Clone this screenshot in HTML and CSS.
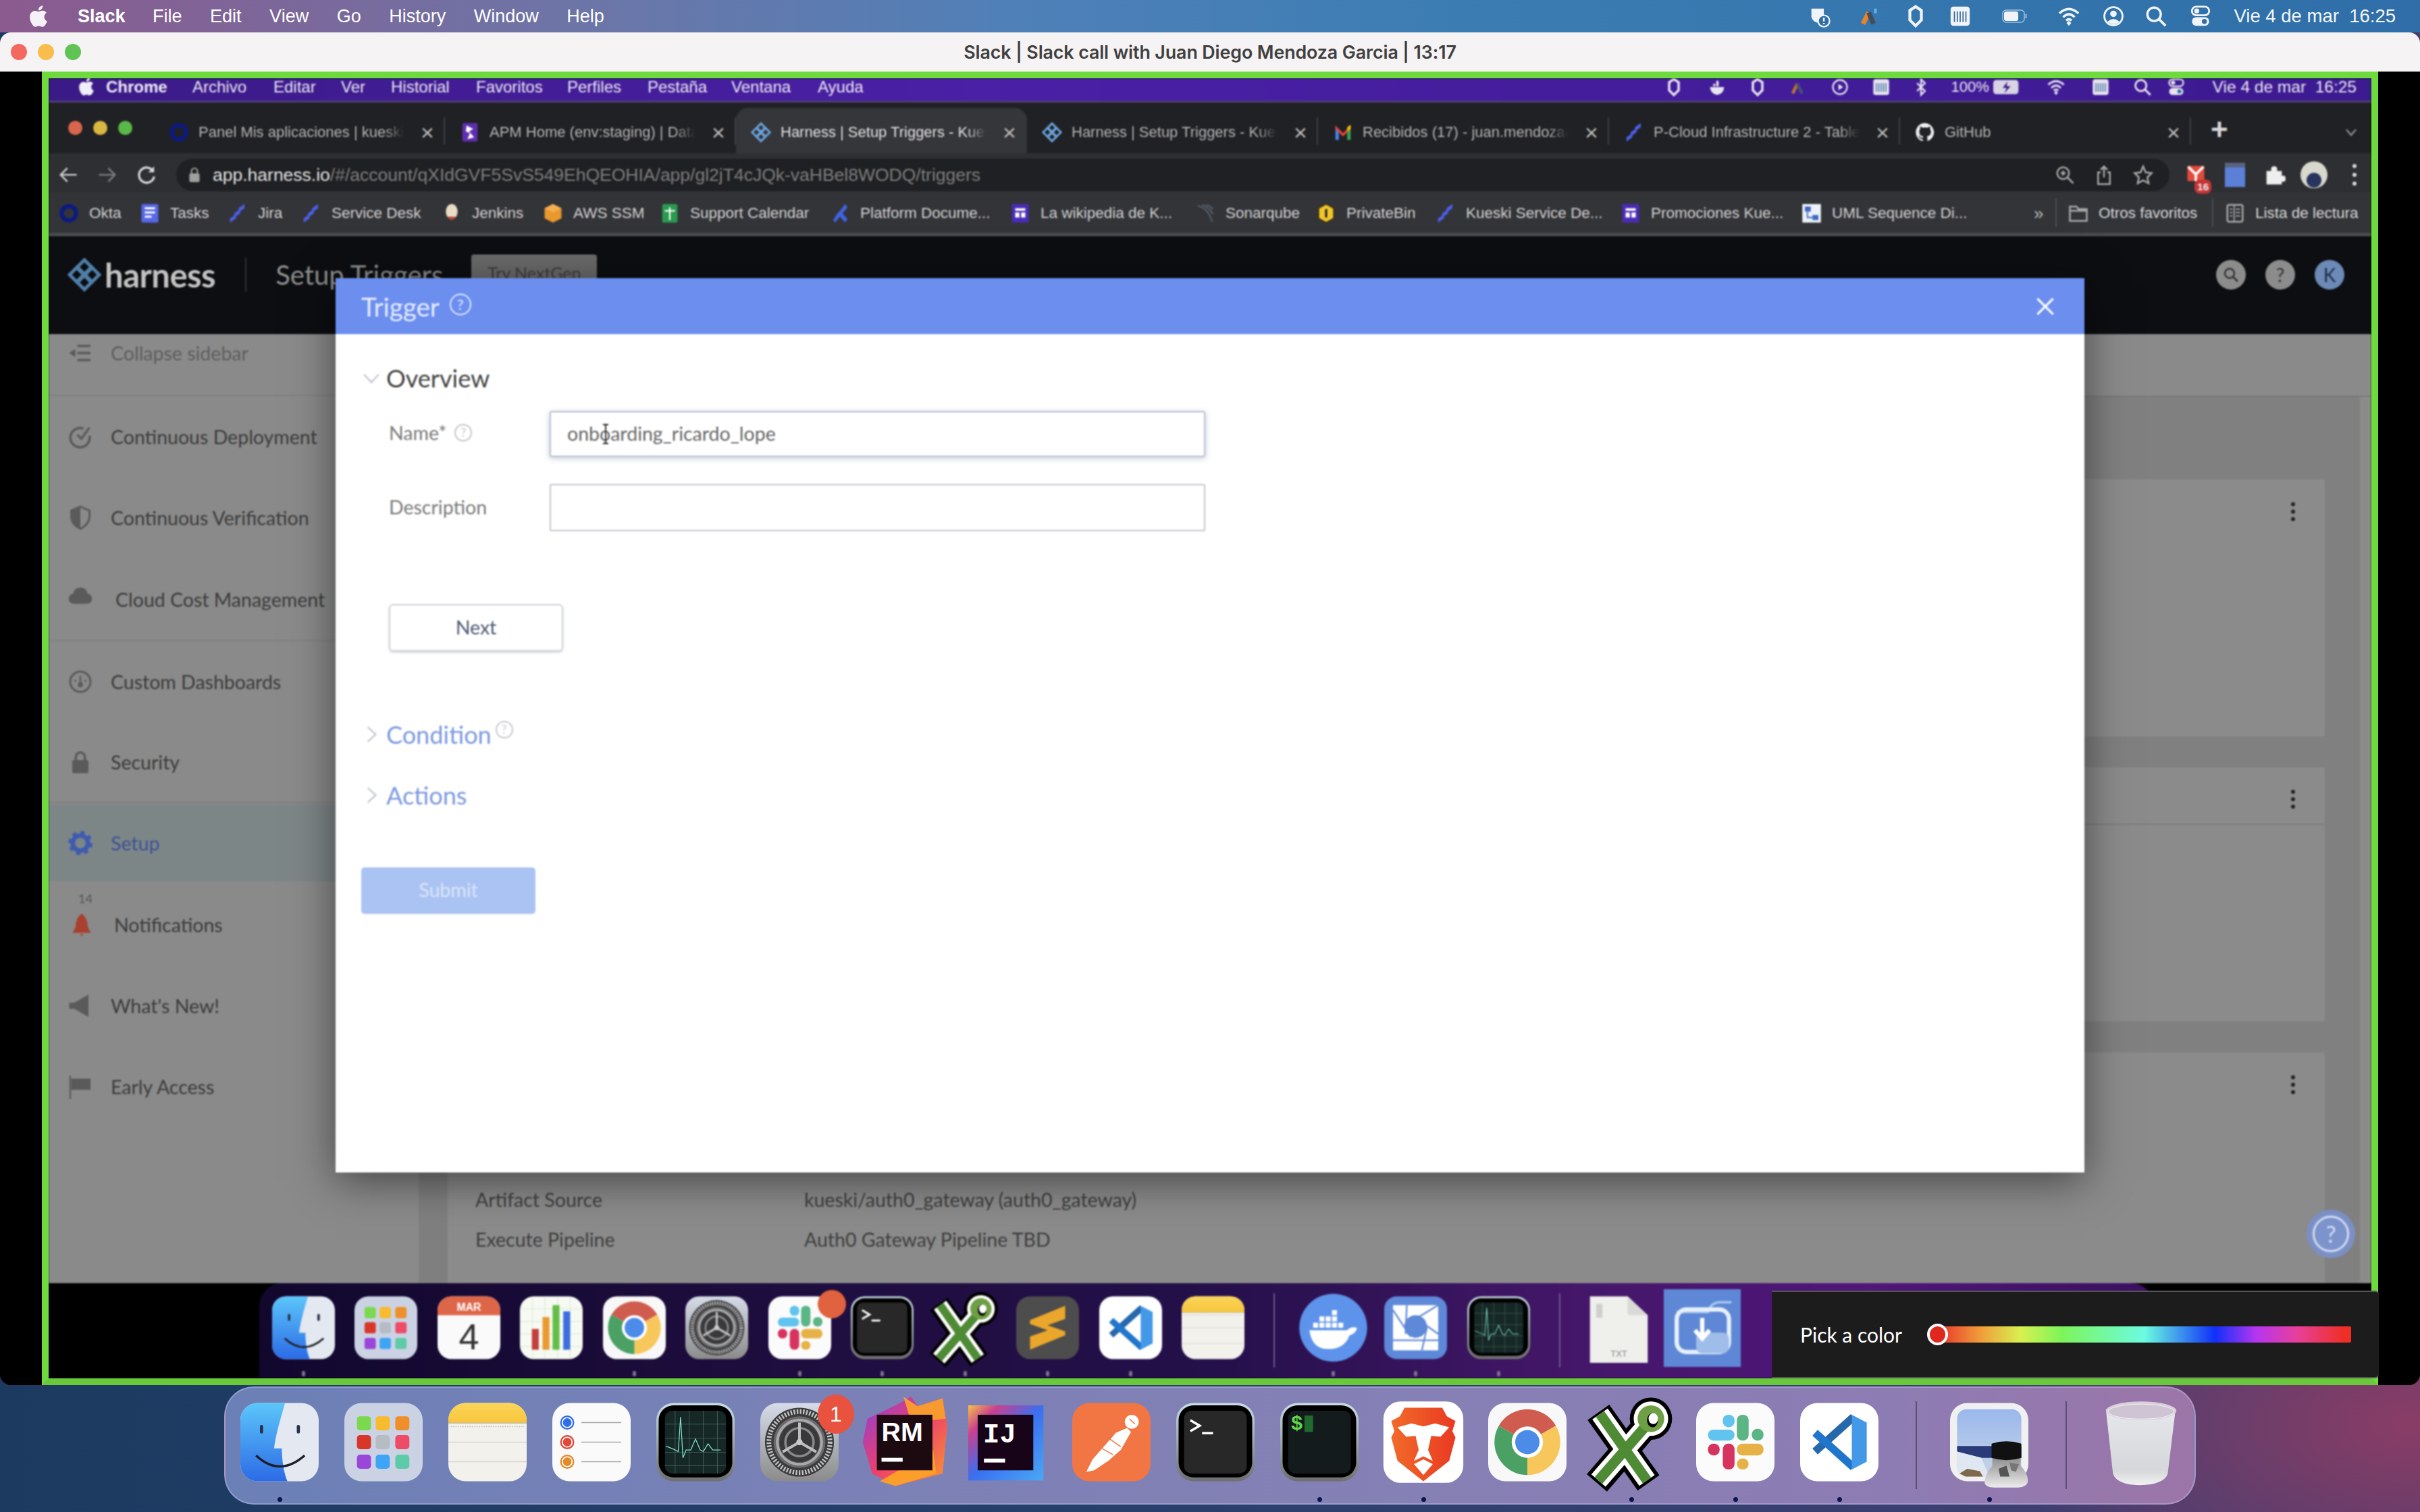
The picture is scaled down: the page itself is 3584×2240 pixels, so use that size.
FILE: index.html
```html
<!DOCTYPE html>
<html lang="en">
<head>
<meta charset="utf-8">
<title>Slack call</title>
<link rel="stylesheet" href="styles.css">
</head>
<body>
<svg class="defs" aria-hidden="true">
  <defs>
    <linearGradient id="gFinder" x1="0" y1="0" x2="0" y2="1"><stop offset="0" stop-color="#5cc6fa"/><stop offset="1" stop-color="#2c6be6"/></linearGradient>
    <linearGradient id="gNote" x1="0" y1="0" x2="0" y2="1"><stop offset="0" stop-color="#fbd65a"/><stop offset="1" stop-color="#f8c53c"/></linearGradient>
    <linearGradient id="gGear" x1="0" y1="0" x2="0" y2="1"><stop offset="0" stop-color="#d6dce8"/><stop offset="1" stop-color="#8b8b8b"/></linearGradient>
    <linearGradient id="gMon" x1="0" y1="0" x2="0" y2="1"><stop offset="0" stop-color="#c8dde6"/><stop offset="1" stop-color="#6f6f6f"/></linearGradient>
    <linearGradient id="gRm" x1="0" y1="0" x2="1" y2="1"><stop offset="0" stop-color="#8a3fd8"/><stop offset=".5" stop-color="#ee3f6c"/><stop offset="1" stop-color="#fb9a2c"/></linearGradient>
    <linearGradient id="gIj" x1="0" y1="0" x2="1" y2="1"><stop offset="0" stop-color="#f7c04a"/><stop offset=".2" stop-color="#c9408f"/><stop offset=".5" stop-color="#3a6ff0"/><stop offset="1" stop-color="#4aa8f5"/></linearGradient>
    <linearGradient id="gBrave" x1="0" y1="0" x2="1" y2="0"><stop offset="0" stop-color="#f26a2a"/><stop offset="1" stop-color="#e93a22"/></linearGradient>
    <linearGradient id="gSky" x1="0" y1="0" x2="0" y2="1"><stop offset="0" stop-color="#9ab8ec"/><stop offset="1" stop-color="#c8d4e8"/></linearGradient>
    <linearGradient id="gTrash" x1="0" y1="0" x2="0" y2="1"><stop offset="0" stop-color="#e6e7ea"/><stop offset=".8" stop-color="#d5d7da"/><stop offset="1" stop-color="#f2f2f2"/></linearGradient>
    <linearGradient id="gBottle" x1="0" y1="0" x2="0" y2="1"><stop offset="0" stop-color="#8f8f8f"/><stop offset="1" stop-color="#ececec"/></linearGradient>

    <symbol id="finder" viewBox="0 0 100 100">
      <rect width="100" height="100" rx="22" fill="#e3e8f1"/>
      <path d="M22 0H57C52 18 45 40 43 58H53C53 72 55 88 60 100H22A22 22 0 0 1 0 78V22A22 22 0 0 1 22 0Z" fill="url(#gFinder)"/>
      <rect x="25" y="28" width="4" height="11" rx="2" fill="#25324a"/><rect x="72" y="28" width="4" height="11" rx="2" fill="#25324a"/>
      <path d="M20 67Q50 95 82 67" fill="none" stroke="#1e1e28" stroke-width="3"/>
    </symbol>
    <symbol id="launchpad" viewBox="0 0 100 100">
      <rect width="100" height="100" rx="22" fill="#cbd2e3"/>
      <rect x="16" y="17" width="18" height="18" rx="4" fill="#7bd84f"/><rect x="40" y="17" width="18" height="18" rx="4" fill="#f8bb2e"/><rect x="65" y="17" width="18" height="18" rx="4" fill="#ee8f2a"/>
      <rect x="16" y="41" width="18" height="18" rx="4" fill="#d9362a"/><rect x="40" y="41" width="18" height="18" rx="4" fill="#b5bcc4"/><rect x="65" y="41" width="18" height="18" rx="4" fill="#ee4b66"/>
      <rect x="16" y="66" width="18" height="18" rx="4" fill="#9a46d8"/><rect x="40" y="66" width="18" height="18" rx="4" fill="#3ea4f5"/><rect x="65" y="66" width="18" height="18" rx="4" fill="#5ecba8"/>
    </symbol>
    <symbol id="notes" viewBox="0 0 100 100">
      <rect width="100" height="100" rx="22" fill="#f3f1ec"/>
      <path d="M0 25V22A22 22 0 0 1 22 0H78A22 22 0 0 1 100 22V25Z" fill="url(#gNote)"/>
      <path d="M0 25.5H100" stroke="#b9a86a" stroke-width="1"/>
      <path d="M3 30H97" stroke="#c9c6bf" stroke-width="1.5" stroke-dasharray="1.5 1.5"/>
      <path d="M0 50H100M0 75H100" stroke="#d8d6d0" stroke-width="1.2"/>
    </symbol>
    <symbol id="reminders" viewBox="0 0 100 100">
      <rect width="100" height="100" rx="22" fill="#fafafa"/>
      <circle cx="19" cy="25" r="8" fill="#fff" stroke="#2f6ee8" stroke-width="2"/><circle cx="19" cy="25" r="5.5" fill="#2f6ee8"/>
      <circle cx="19" cy="50" r="8" fill="#fff" stroke="#e04a3c" stroke-width="2"/><circle cx="19" cy="50" r="5.5" fill="#e04a3c"/>
      <circle cx="19" cy="75" r="8" fill="#fff" stroke="#e38a2c" stroke-width="2"/><circle cx="19" cy="75" r="5.5" fill="#e38a2c"/>
      <path d="M37 25H88M37 50H88M37 75H88" stroke="#a8a8a8" stroke-width="1.4"/>
    </symbol>
    <symbol id="activity" viewBox="0 0 100 100">
      <rect width="100" height="100" rx="22" fill="url(#gMon)"/>
      <rect x="3" y="3" width="94" height="92" rx="19" fill="#000"/>
      <rect x="11" y="10" width="78" height="80" rx="9" fill="#152826"/>
      <path d="M24 10V90M42 10V90M60 10V90M78 10V90M11 27H89M11 45H89M11 63H89M11 80H89" stroke="#4b6662" stroke-width=".7"/>
      <path d="M12 55L22 59L28 62L31 18L34 70L38 60L44 60L50 46L56 60L60 62L66 52L72 60L82 60" fill="none" stroke="#7fdcc6" stroke-width="1.1"/>
    </symbol>
    <symbol id="prefs" viewBox="0 0 100 100">
      <rect width="100" height="100" rx="22" fill="url(#gGear)"/>
      <circle cx="50" cy="50" r="44" fill="#3c3c3e"/>
      <circle cx="50" cy="50" r="39" fill="none" stroke="#c2c2c2" stroke-width="6" stroke-dasharray="2 2"/>
      <circle cx="50" cy="50" r="33" fill="#6a6a6c"/>
      <circle cx="50" cy="50" r="30" fill="#a9a9ab"/>
      <circle cx="50" cy="50" r="26" fill="#39393b"/>
      <path d="M50 24A26 26 0 0 1 72.500 63M72.500 63A26 26 0 0 1 27.500 63M27.500 63A26 26 0 0 1 50 24" fill="none" stroke="#555" stroke-width="1"/>
      <circle cx="50" cy="50" r="18" fill="none" stroke="#8a8a8c" stroke-width="3"/>
      <path d="M50 50V25M50 50L71.500 62.500M50 50L28.500 62.500" stroke="#bdbdbd" stroke-width="3.500"/>
      <circle cx="50" cy="50" r="4" fill="#c8c8c8"/>
    </symbol>
    <symbol id="rubymine" viewBox="0 0 100 100">
      <path d="M4 20L40 3L60 -8L68 4L100 -6L106 30L100 90L40 106L10 90L-2 50Z" fill="url(#gRm)"/>
      <path d="M50 -8L68 4L100 -6L104 20L60 25Z" fill="#f89a2f"/>
      <path d="M20 100L40 106L92 90L88 60Z" fill="#fb9e2a"/>
      <rect x="16" y="15" width="71" height="71" fill="#1c0a10"/>
      <text x="22" y="49" class="t-rm">RM</text>
      <rect x="22" y="70" width="27" height="5" fill="#fff"/>
    </symbol>
    <symbol id="idea" viewBox="0 0 100 100">
      <rect x="0" y="3" width="96" height="96" fill="url(#gIj)"/>
      <rect x="12" y="15" width="71" height="71" fill="#180418"/>
      <text x="19" y="50" class="t-ij">IJ</text>
      <rect x="20" y="71" width="27" height="5" fill="#fff"/>
    </symbol>
    <symbol id="postman" viewBox="0 0 100 100">
      <rect width="100" height="100" rx="22" fill="#f27644"/>
      <circle cx="76" cy="24" r="9" fill="#fff"/>
      <path d="M70 32L75 37L62 60L46 74L28 86L18 88L26 72L40 56L56 38Z" fill="#fff"/>
      <path d="M38 58L52 66M48 46L62 56M73 20L80 27" stroke="#f27644" stroke-width="1.300"/>
    </symbol>
    <symbol id="terminal" viewBox="0 0 100 100">
      <rect width="100" height="100" rx="22" fill="url(#gMon)"/>
      <rect x="3" y="3" width="94" height="92" rx="19" fill="#000"/>
      <rect x="10" y="10" width="80" height="80" rx="9" fill="#282828"/>
      <path d="M18 22L30 29L18 36" fill="none" stroke="#fff" stroke-width="3"/>
      <rect x="33" y="37" width="14" height="3" fill="#fff"/>
    </symbol>
    <symbol id="iterm" viewBox="0 0 100 100">
      <rect width="100" height="100" rx="22" fill="url(#gMon)"/>
      <rect x="3" y="3" width="94" height="92" rx="19" fill="#000"/>
      <rect x="10" y="10" width="80" height="80" rx="9" fill="#141b1c"/>
      <text x="14" y="34" class="t-dollar">$</text>
      <rect x="31" y="16" width="11" height="21" fill="#1f6a2d"/>
    </symbol>
    <symbol id="brave" viewBox="0 0 100 100">
      <rect x="-1" y="-2" width="102" height="104" rx="22" fill="#fff"/>
      <path d="M26 6H74L80 17L91 23L87 36L91 44L83 74L50 100L17 74L9 44L13 36L9 23L20 17Z" fill="url(#gBrave)"/>
      <path d="M50 30L35 26L17 31L28 43L40 42L44 60L38 74L50 68L62 74L56 60L60 42L72 43L83 31L65 26Z" fill="#fff"/>
      <path d="M38 78L50 72L62 78L50 92Z" fill="#fff"/>
    </symbol>
    <symbol id="chrome" viewBox="0 0 100 100">
      <rect width="100" height="100" rx="22" fill="#f8f8f8"/>
      <path d="M50 50L13.6 29A42 42 0 0 1 86.4 29Z" fill="#cf5c4f"/>
      <path d="M50 50L86.4 29A42 42 0 0 1 50 92Z" fill="#f7c75c"/>
      <path d="M50 50L50 92A42 42 0 0 1 13.6 29Z" fill="#4ba064"/>
      <circle cx="50" cy="50" r="20" fill="#fff"/><circle cx="50" cy="50" r="15.5" fill="#4d8be8"/>
    </symbol>
    <symbol id="xquartz" viewBox="0 0 100 100">
      <g fill="none">
        <g stroke="#000" stroke-width="34"><path d="M8 12L72 102"/><path d="M6 102L68 30"/></g>
        <circle cx="75" cy="20" r="27" fill="#000"/>
        <g stroke="#fff" stroke-width="24"><path d="M10 14L70 99"/><path d="M8 99L68 30"/></g>
        <circle cx="75" cy="20" r="22" fill="#fff"/>
        <g stroke="#4f8a35" stroke-width="13"><path d="M10 14L70 99"/><path d="M8 99L68 30"/></g>
        <circle cx="75" cy="20" r="17" fill="#6f9f44"/><ellipse cx="77" cy="22" rx="7" ry="9" fill="#000"/><ellipse cx="78" cy="20" rx="6" ry="7" fill="#fff"/>
      </g>
    </symbol>
    <symbol id="slack" viewBox="0 0 100 100">
      <rect width="100" height="100" rx="22" fill="#fbfbfb"/>
      <g fill="#61c4ef"><rect x="15" y="34" width="34" height="14" rx="7"/><rect x="34" y="15" width="15" height="16" rx="7"/></g>
      <g fill="#5bb585"><rect x="52" y="15" width="15" height="33" rx="7"/><rect x="71" y="33" width="15" height="15" rx="7"/></g>
      <g fill="#d7335f"><rect x="34" y="52" width="15" height="33" rx="7"/><rect x="15" y="52" width="15" height="15" rx="7"/></g>
      <g fill="#e6b247"><rect x="52" y="52" width="34" height="15" rx="7"/><rect x="52" y="71" width="15" height="14" rx="7"/></g>
    </symbol>
    <symbol id="vscode" viewBox="0 0 100 100">
      <rect width="100" height="100" rx="22" fill="#fff"/>
      <path d="M68 18L19 62" stroke="#2668ac" stroke-width="10"/>
      <path d="M19 38L68 82" stroke="#1f76cc" stroke-width="10"/>
      <path d="M66 15L85 25V75L66 85Z" fill="#4498e8"/>
    </symbol>
    <symbol id="preview" viewBox="0 0 100 100">
      <rect x="0" width="100" height="100" rx="22" fill="#f0f0f0"/>
      <rect x="9" y="8" width="82" height="86" rx="12" fill="url(#gSky)"/>
      <path d="M9 55H91V70H40L9 62Z" fill="#2a3b7a"/>
      <path d="M9 62L40 70L50 94H21A12 12 0 0 1 9 82Z" fill="#dfe8f2"/>
      <path d="M12 90L22 84L38 87L42 94H20Z" fill="#80684c"/>
      <path d="M54 70H90V80Q101 92 99 102Q96 108 86 108H56Q46 108 44 102Q44 92 54 80Z" fill="url(#gBottle)"/>
      <path d="M53 52Q72 46 91 52V70Q72 76 53 70Z" fill="#111"/>
      <path d="M62 84L72 80L76 94L64 94Z" fill="#555"/><path d="M76 76L88 78L84 88L78 86Z" fill="#777"/>
    </symbol>
    <symbol id="trash" viewBox="0 0 100 100">
      <path d="M5 8L14 90Q18 104 48 105Q80 104 84 90L94 8Z" fill="url(#gTrash)"/>
      <ellipse cx="50" cy="10" rx="45" ry="12" fill="#d8cfdc"/>
      <ellipse cx="50" cy="11" rx="42" ry="9.5" fill="#cfc4d4" stroke="#eee" stroke-width="1"/>
    </symbol>
    <symbol id="calendar" viewBox="0 0 100 100">
      <rect width="100" height="100" rx="22" fill="#fafafa"/>
      <path d="M0 30V22A22 22 0 0 1 22 0H78A22 22 0 0 1 100 22V30Z" fill="#de6648"/>
      <text x="50" y="23" class="t-mar">MAR</text>
      <text x="50" y="84" class="t-four">4</text>
    </symbol>
    <symbol id="numbers" viewBox="0 0 100 100">
      <rect width="100" height="100" rx="22" fill="#f6faf2"/>
      <path d="M0 20H100M0 40H100M0 60H100M0 80H100M20 0V100M40 0V100M60 0V100M80 0V100" stroke="#d4e0cf" stroke-width=".8"/>
      <rect x="19" y="52" width="11" height="33" fill="#c23f3c"/><rect x="36" y="33" width="11" height="52" fill="#ea9a30"/><rect x="52" y="14" width="11" height="71" fill="#63bf47"/><rect x="69" y="24" width="11" height="61" fill="#3c6ee2"/>
    </symbol>
    <symbol id="sublime" viewBox="0 0 100 100">
      <rect width="100" height="100" rx="22" fill="#4d4d4d"/>
      <path d="M78 15V36L50 46L78 56V62L22 85V64L50 54L22 44V38Z" fill="#eba62c"/>
    </symbol>
    <symbol id="docker" viewBox="0 0 100 100">
      <circle cx="50" cy="50" r="54" fill="#5d93ea"/>
      <path d="M12 54H72Q78 47 88 50Q86 60 76 62Q68 84 42 84Q16 84 12 54Z" fill="#fff"/>
      <g fill="#fff"><rect x="18" y="42" width="8" height="8"/><rect x="28" y="42" width="8" height="8"/><rect x="38" y="42" width="8" height="8"/><rect x="48" y="42" width="8" height="8"/><rect x="58" y="42" width="8" height="8"/><rect x="28" y="32" width="8" height="8"/><rect x="38" y="32" width="8" height="8"/><rect x="48" y="32" width="8" height="8"/><rect x="48" y="22" width="8" height="8"/></g>
    </symbol>
    <symbol id="shot" viewBox="0 0 100 100">
      <rect width="100" height="100" rx="20" fill="#5e88d8"/>
      <rect x="14" y="14" width="72" height="72" fill="#fff"/>
      <circle cx="50" cy="48" r="18" fill="#5e88d8"/>
      <path d="M14 22L42 64M86 14L50 36M36 14L34 60M86 60L58 40M14 70H86M60 86L68 50" stroke="#5e88d8" stroke-width="2.5"/>
    </symbol>
    <symbol id="txt" viewBox="0 0 100 100">
      <path d="M4 0H64L96 30V106H4Z" fill="#efefec"/>
      <path d="M64 0L96 30H68Q64 30 64 26Z" fill="#d9d9d6"/>
      <rect x="14" y="12" width="10" height="22" fill="#cfcfcd"/>
      <text x="50" y="96" class="t-txt">TXT</text>
    </symbol>
    <symbol id="dl" viewBox="0 0 100 100">
      <path d="M8 24H60Q64 8 80 8H98" fill="none" stroke="#a8c8f0" stroke-width="4"/>
      <rect x="8" y="20" width="86" height="70" rx="16" fill="none" stroke="#e8f0fb" stroke-width="7"/>
      <rect x="40" y="58" width="54" height="34" rx="10" fill="#9fbde9"/>
      <path d="M50 34V66M38 54L50 68L62 54" fill="none" stroke="#fff" stroke-width="7"/>
    </symbol>

    <symbol id="apple" viewBox="0 0 24 24"><path fill="currentColor" d="M18.71 19.5c-.83 1.24-1.71 2.45-3.05 2.47-1.34.03-1.77-.79-3.29-.79-1.53 0-2 .77-3.27.82-1.31.05-2.3-1.32-3.14-2.53C4.25 17 2.94 12.45 4.7 9.39c.87-1.52 2.43-2.48 4.12-2.51 1.28-.02 2.5.87 3.29.87.78 0 2.26-1.07 3.8-.91.65.03 2.47.26 3.64 1.98-.09.06-2.17 1.28-2.15 3.81.03 3.02 2.65 4.03 2.68 4.04-.03.07-.42 1.44-1.38 2.83M13 3.5c.73-.83 1.94-1.46 2.94-1.5.13 1.17-.34 2.35-1.04 3.19-.69.85-1.83 1.51-2.95 1.42-.15-1.15.41-2.35 1.05-3.11z"/></symbol>
    <symbol id="wifi" viewBox="0 0 24 24"><path d="M2 9Q12 0 22 9M6 13Q12 7 18 13M9.2 16.5Q12 14 14.8 16.5" fill="none" stroke="currentColor" stroke-width="2.4"/><path d="M12 22L9.5 19L12 17L14.5 19Z" fill="currentColor"/></symbol>
    <symbol id="search" viewBox="0 0 24 24"><circle cx="10" cy="10" r="7" fill="none" stroke="currentColor" stroke-width="2.4"/><path d="M15 15L22 22" stroke="currentColor" stroke-width="2.6"/></symbol>
    <symbol id="control" viewBox="0 0 24 24"><rect x="3" y="2" width="18" height="9" rx="4.5" fill="none" stroke="currentColor" stroke-width="2"/><circle cx="8" cy="6.5" r="2.6" fill="currentColor"/><rect x="3" y="13" width="18" height="9" rx="4.5" fill="currentColor"/><circle cx="16" cy="17.5" r="2.6" fill="#2f6ea8"/></symbol>
    <symbol id="mem" viewBox="0 0 24 24"><rect x="2" y="2" width="20" height="20" rx="3" fill="currentColor"/><path d="M6 7V18M9 7V18M12 7V18M15 7V18M18 7V18" stroke="#35689a" stroke-width="1.2"/></symbol>
    <symbol id="blob" viewBox="0 0 24 24"><path d="M12 2L18 6V16L12 22L6 16V6Z" fill="none" stroke="currentColor" stroke-width="3"/></symbol>
    <symbol id="user" viewBox="0 0 24 24"><circle cx="12" cy="12" r="9.5" fill="none" stroke="currentColor" stroke-width="2"/><circle cx="12" cy="9.5" r="3.4" fill="currentColor"/><path d="M5.5 18Q12 12 18.5 18Q12 23 5.5 18Z" fill="currentColor"/></symbol>
    <symbol id="dockw" viewBox="0 0 24 24"><path d="M3 12H21Q20 21 12 22Q4 21 3 12Z" fill="currentColor"/><path d="M7 11V8H10V11M11 11V4H14V11" fill="currentColor"/></symbol>

    <symbol id="hz" viewBox="0 0 24 24"><g fill="none" stroke="currentColor" stroke-width="2.4"><path d="M12 1.5L17 6.5L12 11.5L7 6.5Z"/><path d="M6.5 7L11.5 12L6.5 17L1.5 12Z"/><path d="M17.5 7L22.5 12L17.5 17L12.5 12Z"/><path d="M12 12.5L17 17.5L12 22.5L7 17.5Z"/></g></symbol>
    <symbol id="okta" viewBox="0 0 24 24"><circle cx="12" cy="12" r="8.5" fill="none" stroke="#0d1a80" stroke-width="5"/></symbol>
    <symbol id="jira" viewBox="0 0 24 24"><path d="M20 1L13 6V11L20 6ZM15 7L8 12V17L15 12ZM10 13L3 18V23L10 18Z" fill="#4b5ee8"/></symbol>
    <symbol id="tasks" viewBox="0 0 24 24"><rect x="2" y="1" width="20" height="22" rx="2" fill="#5668e8"/><path d="M6 6H18M6 11H18M6 16H14" stroke="#fff" stroke-width="2.4"/></symbol>
    <symbol id="jenkins" viewBox="0 0 24 24"><ellipse cx="12" cy="10" rx="7" ry="9" fill="#e8dcc4"/><path d="M7 16Q12 24 17 16Z" fill="#b34a3a"/></symbol>
    <symbol id="aws" viewBox="0 0 24 24"><path d="M12 1L22 6V18L12 23L2 18V6Z" fill="#e8982c"/><path d="M12 1L22 6L12 11L2 6Z" fill="#f2b050"/></symbol>
    <symbol id="sheet" viewBox="0 0 24 24"><rect x="3" y="1" width="18" height="22" rx="2" fill="#2a9a4e"/><path d="M12 5V20M6 9H18" stroke="#fff" stroke-width="1.8"/></symbol>
    <symbol id="xdoc" viewBox="0 0 24 24"><path d="M18 1L21 5L15 12L21 19L18 23L12 16L6 23L4 20L9 12L12 9Z" fill="#3f62e0"/></symbol>
    <symbol id="wiki" viewBox="0 0 24 24"><rect x="2" y="1" width="20" height="22" fill="#4a2bb5"/><rect x="6" y="6" width="12" height="3" fill="#fff"/><rect x="6" y="11" width="5" height="6" fill="#fff"/><rect x="13" y="11" width="5" height="6" fill="#fff"/></symbol>
    <symbol id="sonar" viewBox="0 0 24 24"><path d="M3 3Q16 6 20 22M8 2Q17 5 21 13M13 2Q18 3 21 7" fill="none" stroke="#55606a" stroke-width="1.8"/></symbol>
    <symbol id="pbin" viewBox="0 0 24 24"><path d="M12 1L21 6V18L12 23L3 18V6Z" fill="#f1c52c" stroke="#3a3010" stroke-width="1.5"/><path d="M12 7V17" stroke="#222" stroke-width="2.6"/></symbol>
    <symbol id="uml" viewBox="0 0 24 24"><rect x="1" y="1" width="22" height="22" fill="#eef2f8"/><rect x="4" y="4" width="7" height="6" fill="#3e68c8"/><rect x="13" y="14" width="7" height="6" fill="#3e68c8"/><path d="M7 10V17H13" fill="none" stroke="#3e68c8" stroke-width="1.5"/></symbol>
    <symbol id="folder" viewBox="0 0 24 24"><path d="M2 4H10L12 7H22V21H2Z" fill="none" stroke="currentColor" stroke-width="2"/><path d="M2 9H22" stroke="currentColor" stroke-width="2"/></symbol>
    <symbol id="rlist" viewBox="0 0 24 24"><rect x="3" y="2" width="18" height="20" rx="2" fill="none" stroke="currentColor" stroke-width="2"/><path d="M11 2V22M6 7H9M6 11H9M6 15H9M13 7H18M13 11H18M13 15H18" stroke="currentColor" stroke-width="1.4"/></symbol>
    <symbol id="dd" viewBox="0 0 24 24"><rect x="3" y="1" width="18" height="22" rx="2" fill="#5f2db0"/><path d="M8 4L16 8L11 11L17 18L9 20L12 13L7 11Z" fill="#fff"/></symbol>
    <symbol id="gmail" viewBox="0 0 24 24"><path d="M3 4V21H7V10Z" fill="#4285f4"/><path d="M21 4V21H17V10Z" fill="#34a853"/><path d="M3 4L12 13L21 4L21 8L12 17L3 8Z" fill="#ea4335"/><path d="M17 6L21 3V8L17 11Z" fill="#fbbc05"/></symbol>
    <symbol id="gh" viewBox="0 0 24 24"><path fill="#f0f0f0" d="M12 1A11 11 0 0 0 8.5 22.4c.6.1.8-.2.8-.5v-2c-3 .6-3.7-1.4-3.7-1.4-.5-1.3-1.2-1.6-1.2-1.6-1-.7.1-.7.1-.7 1.1.1 1.7 1.1 1.7 1.1 1 1.7 2.6 1.2 3.2.9.1-.7.4-1.2.7-1.5-2.4-.3-5-1.2-5-5.4 0-1.2.4-2.2 1.1-2.9-.1-.3-.5-1.4.1-2.9 0 0 .9-.3 3 1.1a10.400 10.400 0 0 1 5.500 0c2.100-1.400 3-1.100 3-1.100.6 1.500.2 2.600.1 2.900.7.800 1.100 1.700 1.100 2.900 0 4.200-2.600 5.100-5 5.400.4.300.8 1 .8 2v3c0 .3.200.6.800.5A11 11 0 0 0 12 1Z"/></symbol>
    <symbol id="star" viewBox="0 0 24 24"><path d="M12 2L15 9L22 10L17 15L18.500 22L12 18.500L5.500 22L7 15L2 10L9 9Z" fill="none" stroke="currentColor" stroke-width="2"/></symbol>
    <symbol id="puzzle" viewBox="0 0 24 24"><path d="M4 8H9Q8 3 12 3Q16 3 15 8H20V13Q24 12 24 16Q24 20 20 19V22H4Z" fill="currentColor"/></symbol>
    <symbol id="share" viewBox="0 0 24 24"><path d="M8 9H5V23H19V9H16M12 15V2M8 6L12 2L16 6" fill="none" stroke="currentColor" stroke-width="2"/></symbol>
    <symbol id="zoomi" viewBox="0 0 24 24"><circle cx="10" cy="10" r="7" fill="none" stroke="currentColor" stroke-width="2"/><path d="M15 15L22 22M7 10H13M10 7V13" stroke="currentColor" stroke-width="2"/></symbol>
  </defs>
</svg>

<div class="screen">
  <header class="menubar">
    <svg class="m-apple"><use href="#apple"/></svg>
    <nav class="m-left">
      <b>Slack</b><span>File</span><span>Edit</span><span>View</span><span>Go</span><span>History</span><span>Window</span><span>Help</span>
    </nav>
    <div class="m-right">
      <svg class="m-ic" viewBox="0 0 24 24"><path d="M4 4H17V12Q14 13 13 19Q6 19 4 13Z" fill="#f0f4f8"/><circle cx="17" cy="17" r="6" fill="#2f6ea8" stroke="#f0f4f8" stroke-width="1.600"/><path d="M17 13.500V17.500M17 19V20.500" stroke="#f0f4f8" stroke-width="1.800"/></svg>
      <svg class="m-ic m-tool" viewBox="0 0 24 24"><path d="M5 20L11 8" stroke="#e8822c" stroke-width="5"/><path d="M11 8L16 20" stroke="#444e5a" stroke-width="5"/><path d="M18 9V4" stroke="#5ab0e0" stroke-width="3"/></svg>
      <svg class="m-ic"><use href="#blob"/></svg>
      <svg class="m-ic"><use href="#mem"/></svg>
      <svg class="m-ic" viewBox="0 0 40 24"><rect x="2" y="3" width="32" height="18" rx="5" fill="none" stroke="#9cc0de" stroke-width="1.500"/><rect x="4" y="5" width="21" height="14" rx="3" fill="#f0f4f8"/><rect x="35.500" y="9" width="2" height="6" fill="#9cc0de"/></svg>
      <svg class="m-ic"><use href="#wifi"/></svg>
      <svg class="m-ic"><use href="#user"/></svg>
      <svg class="m-ic"><use href="#search"/></svg>
      <svg class="m-ic"><use href="#control"/></svg>
      <span class="m-clock">Vie 4 de mar&nbsp; 16:25</span>
    </div>
  </header>

  <main class="slack-window">
    <div class="titlebar">
      <div class="lights"><i class="l-r"></i><i class="l-y"></i><i class="l-g"></i></div>
      <h1 class="title">Slack | Slack call with Juan Diego Mendoza Garcia | 13:17</h1>
    </div>
    <div class="call-area">
      <div class="green-frame">
        <div class="video">
          <div class="imenu">
            <svg class="i-apple"><use href="#apple"/></svg>
            <div class="imenu-left">
              <b>Chrome</b><span>Archivo</span><span>Editar</span><span>Ver</span><span>Historial</span><span>Favoritos</span><span>Perfiles</span><span>Pestaña</span><span>Ventana</span><span>Ayuda</span>
            </div>
            <div class="imenu-right">
              <svg class="imi"><use href="#blob"/></svg>
              <svg class="imi"><use href="#dockw"/></svg>
              <svg class="imi"><use href="#blob"/></svg>
              <svg class="imi" viewBox="0 0 24 24"><path d="M5 20L11 8" stroke="#b8762c" stroke-width="4"/><path d="M11 8L17 20" stroke="#44507a" stroke-width="4"/></svg>
              <svg class="imi" viewBox="0 0 24 24"><circle cx="12" cy="12" r="9" fill="none" stroke="#e8e4f0" stroke-width="2"/><path d="M10 8L16 12L10 16Z" fill="#e8e4f0"/></svg>
              <svg class="imi"><use href="#mem"/></svg>
              <svg class="imi" viewBox="0 0 24 24"><path d="M7 7L17 17L12 22V2L17 7L7 17" fill="none" stroke="#e8e4f0" stroke-width="2"/></svg>
              <span class="i-pct">100%</span>
              <svg class="imi imi-wide" viewBox="0 0 40 24"><rect x="2" y="3" width="32" height="18" rx="4" fill="#d8d4e4"/><path d="M20 5L14 13H19L16 20L24 11H19Z" fill="#3d1a8e"/></svg>
              <svg class="imi"><use href="#wifi"/></svg>
              <svg class="imi"><use href="#mem"/></svg>
              <svg class="imi"><use href="#search"/></svg>
              <svg class="imi"><use href="#control"/></svg>
              <span class="i-clock">Vie 4 de mar&nbsp; 16:25</span>
            </div>
          </div>

          <div class="tabbar">
            <div class="i-lights"><i class="l-r2"></i><i class="l-y2"></i><i class="l-g2"></i></div>
            <div class="tab"><svg class="fav"><use href="#okta"/></svg><span class="tab-t">Panel Mis aplicaciones | kueski</span><span class="tab-x">×</span></div>
            <div class="tab"><svg class="fav"><use href="#dd"/></svg><span class="tab-t">APM Home (env:staging) | Datadog</span><span class="tab-x">×</span></div>
            <div class="tab tab-on"><svg class="fav fav-hz"><use href="#hz"/></svg><span class="tab-t">Harness | Setup Triggers - Kueski</span><span class="tab-x">×</span></div>
            <div class="tab"><svg class="fav fav-hz"><use href="#hz"/></svg><span class="tab-t">Harness | Setup Triggers - Kueski</span><span class="tab-x">×</span></div>
            <div class="tab"><svg class="fav"><use href="#gmail"/></svg><span class="tab-t">Recibidos (17) - juan.mendoza@kueski</span><span class="tab-x">×</span></div>
            <div class="tab"><svg class="fav"><use href="#jira"/></svg><span class="tab-t">P-Cloud Infrastructure 2 - Tablero</span><span class="tab-x">×</span></div>
            <div class="tab"><svg class="fav"><use href="#gh"/></svg><span class="tab-t">GitHub</span><span class="tab-x">×</span></div>
            <span class="tab-plus">+</span>
            <svg class="tab-chev" viewBox="0 0 24 24"><path d="M5 8L12 16L19 8" fill="none" stroke="currentColor" stroke-width="2.500"/></svg>
          </div>

          <div class="toolbar">
            <svg class="tb tb-back" viewBox="0 0 24 24"><path d="M22 12H3M11 4L3 12L11 20" fill="none" stroke="currentColor" stroke-width="2"/></svg>
            <svg class="tb tb-fwd" viewBox="0 0 24 24"><path d="M2 12H21M13 4L21 12L13 20" fill="none" stroke="currentColor" stroke-width="2"/></svg>
            <svg class="tb tb-rel" viewBox="0 0 24 24"><path d="M20 8A9 9 0 1 0 21 14" fill="none" stroke="currentColor" stroke-width="2.600"/><path d="M21 2V9H14Z" fill="currentColor"/></svg>
            <div class="omnibox">
              <svg class="lock" viewBox="0 0 24 24"><rect x="5" y="10" width="14" height="12" rx="2" fill="currentColor"/><path d="M8 10V7A4 4 0 0 1 16 7V10" fill="none" stroke="currentColor" stroke-width="2"/></svg>
              <span class="url"><b>app.harness.io</b>/#/account/qXIdGVF5SvS549EhQEOHIA/app/gl2jT4cJQk-vaHBel8WODQ/triggers</span>
              <svg class="ob"><use href="#zoomi"/></svg>
              <svg class="ob"><use href="#share"/></svg>
              <svg class="ob"><use href="#star"/></svg>
            </div>
            <div class="ext ext-red"><svg viewBox="0 0 24 24"><rect x="2" y="3" width="20" height="18" fill="#e34a3c"/><path d="M3 4L12 13L21 4M12 13V21" fill="none" stroke="#fff" stroke-width="3"/></svg><em>16</em></div>
            <div class="ext ext-blue"></div>
            <svg class="ext-p"><use href="#puzzle"/></svg>
            <div class="avatar"></div>
            <div class="kebab kebab-l"><i></i><i></i><i></i></div>
          </div>

          <div class="bookmarks">
            <div class="bm"><svg><use href="#okta"/></svg><span>Okta</span></div>
            <div class="bm"><svg><use href="#tasks"/></svg><span>Tasks</span></div>
            <div class="bm"><svg><use href="#jira"/></svg><span>Jira</span></div>
            <div class="bm"><svg><use href="#jira"/></svg><span>Service Desk</span></div>
            <div class="bm"><svg><use href="#jenkins"/></svg><span>Jenkins</span></div>
            <div class="bm"><svg><use href="#aws"/></svg><span>AWS SSM</span></div>
            <div class="bm"><svg><use href="#sheet"/></svg><span>Support Calendar</span></div>
            <div class="bm"><svg><use href="#xdoc"/></svg><span>Platform Docume...</span></div>
            <div class="bm"><svg><use href="#wiki"/></svg><span>La wikipedia de K...</span></div>
            <div class="bm"><svg><use href="#sonar"/></svg><span>Sonarqube</span></div>
            <div class="bm"><svg><use href="#pbin"/></svg><span>PrivateBin</span></div>
            <div class="bm"><svg><use href="#jira"/></svg><span>Kueski Service De...</span></div>
            <div class="bm"><svg><use href="#wiki"/></svg><span>Promociones Kue...</span></div>
            <div class="bm"><svg><use href="#uml"/></svg><span>UML Sequence Di...</span></div>
            <div class="bm bm-more">»</div>
            <div class="bm bm-dv"><svg><use href="#folder"/></svg><span>Otros favoritos</span></div>
            <div class="bm bm-dv"><svg><use href="#rlist"/></svg><span>Lista de lectura</span></div>
          </div>

          <div class="hz-header">
            <svg class="hz-logo"><use href="#hz"/></svg>
            <span class="hz-name">harness</span>
            <span class="hz-div"></span>
            <span class="hz-page">Setup Triggers</span>
            <span class="hz-try">Try NextGen</span>
            <div class="hz-right">
              <span class="hz-circ"><svg><use href="#search"/></svg></span>
              <span class="hz-circ">?</span>
              <span class="hz-circ hz-k">K</span>
            </div>
          </div>

          <div class="hz-body">
            <aside class="sidebar">
              <div class="s-row s-collapse">
                <svg viewBox="0 0 24 24"><path d="M9 5H22M9 12H22M9 19H22" stroke="currentColor" stroke-width="2.400"/><path d="M7 8V16L1 12Z" fill="currentColor"/></svg>
                <span class="s-dim">Collapse sidebar</span>
              </div>
              <div class="s-row">
                <svg viewBox="0 0 24 24"><path d="M15 4A9.500 9.500 0 1 0 21 11" fill="none" stroke="currentColor" stroke-width="2.400"/><path d="M9 10L13 14L21 3" fill="none" stroke="currentColor" stroke-width="2.200"/></svg>
                <span>Continuous Deployment</span>
              </div>
              <div class="s-row">
                <svg viewBox="0 0 24 24"><path d="M12 1L21 5V12Q20 19 12 23Q4 19 3 12V5Z" fill="none" stroke="currentColor" stroke-width="2"/><path d="M12 1L3 5V12Q4 19 12 23Z" fill="currentColor"/></svg>
                <span>Continuous Verification</span>
              </div>
              <div class="s-row s-ccm s-sep">
                <svg viewBox="0 0 24 24"><path d="M6 19A5 5 0 0 1 5 9Q6 3 12 3Q18 3 19 9A5 5 0 0 1 18 19Z" fill="currentColor"/></svg>
                <span>Cloud Cost Management</span>
              </div>
              <div class="s-row">
                <svg viewBox="0 0 24 24"><circle cx="12" cy="12" r="10" fill="none" stroke="currentColor" stroke-width="2"/><circle cx="12" cy="15" r="2.500" fill="currentColor"/><path d="M12 6V13M6 11H8M16 11H18" stroke="currentColor" stroke-width="1.600"/></svg>
                <span>Custom Dashboards</span>
              </div>
              <div class="s-row s-sep">
                <svg viewBox="0 0 24 24"><rect x="4" y="10" width="16" height="13" rx="1.500" fill="currentColor"/><path d="M7.500 11V7A4.500 4.500 0 0 1 16.500 7V11" fill="none" stroke="currentColor" stroke-width="2.400"/></svg>
                <span>Security</span>
              </div>
              <div class="s-row s-active">
                <svg viewBox="0 0 24 24"><circle cx="12" cy="12" r="7.500" fill="none" stroke="currentColor" stroke-width="4.500"/><circle cx="12" cy="12" r="10.500" fill="none" stroke="currentColor" stroke-width="3" stroke-dasharray="4.200 4"/></svg>
                <span>Setup</span>
              </div>
              <div class="s-row s-notif">
                <svg class="s-bell" viewBox="0 0 24 24"><path d="M12 1Q18 5 18 14L21 20H3L6 14Q6 5 12 1Z" fill="#a8402f"/><circle cx="12" cy="22" r="1.200" fill="#a8402f"/></svg>
                <em class="s-count">14</em>
                <span>Notifications</span>
              </div>
              <div class="s-row">
                <svg viewBox="0 0 24 24"><path d="M1 9H6L20 1V23L6 15H1Z" fill="currentColor"/></svg>
                <span>What's New!</span>
              </div>
              <div class="s-row">
                <svg viewBox="0 0 24 24"><path d="M2 1V24" stroke="currentColor" stroke-width="1.600"/><path d="M3 4H22V15H3Z" fill="currentColor"/></svg>
                <span>Early Access</span>
              </div>
            </aside>
            <div class="gutter"></div>
            <section class="content">
              <div class="c-top"></div>
              <div class="c-list">
                <article class="card card-1">
                  <div class="card-h"><div class="kebab"><i></i><i></i><i></i></div></div>
                </article>
                <article class="card card-2">
                  <div class="card-h card-h-line"><div class="kebab"><i></i><i></i><i></i></div></div>
                </article>
                <article class="card card-3">
                  <div class="card-h"><div class="kebab"><i></i><i></i><i></i></div></div>
                  <dl class="kv">
                    <dt>Artifact Source</dt><dd>kueski/auth0_gateway (auth0_gateway)</dd>
                    <dt>Execute Pipeline</dt><dd>Auth0 Gateway Pipeline TBD</dd>
                  </dl>
                </article>
              </div>
              <div class="help-fab"><span>?</span></div>
            </section>
          </div>

          <div class="inner-dock-row">
            <div class="inner-dock">
              <div class="islot"><svg class="iico"><use href="#finder"/></svg><i class="idot"></i></div>
              <div class="islot"><svg class="iico"><use href="#launchpad"/></svg></div>
              <div class="islot"><svg class="iico"><use href="#calendar"/></svg></div>
              <div class="islot"><svg class="iico"><use href="#numbers"/></svg></div>
              <div class="islot"><svg class="iico"><use href="#chrome"/></svg><i class="idot"></i></div>
              <div class="islot"><svg class="iico"><use href="#prefs"/></svg></div>
              <div class="islot"><svg class="iico"><use href="#slack"/></svg><i class="idot"></i><em class="ibadge"></em></div>
              <div class="islot"><svg class="iico"><use href="#terminal"/></svg><i class="idot"></i></div>
              <div class="islot"><svg class="iico"><use href="#xquartz"/></svg><i class="idot"></i></div>
              <div class="islot"><svg class="iico"><use href="#sublime"/></svg><i class="idot"></i></div>
              <div class="islot"><svg class="iico"><use href="#vscode"/></svg><i class="idot"></i></div>
              <div class="islot"><svg class="iico"><use href="#notes"/></svg></div>
              <span class="isep isep-1"></span>
              <div class="islot"><svg class="iico"><use href="#docker"/></svg><i class="idot"></i></div>
              <div class="islot"><svg class="iico"><use href="#shot"/></svg><i class="idot"></i></div>
              <div class="islot"><svg class="iico"><use href="#activity"/></svg><i class="idot"></i></div>
              <span class="isep isep-2"></span>
              <div class="islot"><svg class="iico"><use href="#txt"/></svg></div>
              <div class="idl"><svg><use href="#dl"/></svg></div>
            </div>
          </div>

          <div class="modal">
            <div class="modal-h">
              <span class="modal-t">Trigger</span><span class="qm qm-w">?</span>
              <svg class="modal-x" viewBox="0 0 24 24"><path d="M2 2L22 22M22 2L2 22" stroke="#fff" stroke-width="2.600"/></svg>
            </div>
            <div class="sec-h sec-open">
              <svg viewBox="0 0 24 24"><path d="M2 7L12 18L22 7" fill="none" stroke="#b8bdc6" stroke-width="1.800"/></svg>
              <span>Overview</span>
            </div>
            <div class="form">
              <div class="field field-1">
                <label>Name* <span class="qm qm-g">?</span></label>
                <div class="input input-on">onboarding_ricardo_lope</div>
              </div>
              <div class="field field-2">
                <label>Description</label>
                <div class="input"></div>
              </div>
              <div class="btn-next">Next</div>
            </div>
            <div class="sec-h sec-cond">
              <svg viewBox="0 0 24 24"><path d="M7 2L18 12L7 22" fill="none" stroke="#b8bdc6" stroke-width="1.800"/></svg>
              <span>Condition</span><span class="qm qm-c">?</span>
            </div>
            <div class="sec-h sec-act">
              <svg viewBox="0 0 24 24"><path d="M7 2L18 12L7 22" fill="none" stroke="#b8bdc6" stroke-width="1.800"/></svg>
              <span>Actions</span>
            </div>
            <div class="btn-submit">Submit</div>
            <svg class="ibeam" viewBox="0 0 12 30"><path d="M2 1H5L6 2L7 1H10M6 2V28M2 29H5L6 28L7 29H10" fill="none" stroke="#222" stroke-width="1.800"/></svg>
          </div>
        </div>
      </div>
    </div>
    <div class="picker">
      <span class="picker-t">Pick a color</span>
      <div class="picker-bar"><i></i></div>
    </div>
  </main>

  <footer class="dock">
    <div class="slot"><svg class="ico"><use href="#finder"/></svg><i class="dot"></i></div>
    <div class="slot"><svg class="ico"><use href="#launchpad"/></svg></div>
    <div class="slot"><svg class="ico"><use href="#notes"/></svg></div>
    <div class="slot"><svg class="ico"><use href="#reminders"/></svg></div>
    <div class="slot"><svg class="ico"><use href="#activity"/></svg></div>
    <div class="slot"><svg class="ico"><use href="#prefs"/></svg><em class="badge">1</em></div>
    <div class="slot"><svg class="ico"><use href="#rubymine"/></svg></div>
    <div class="slot"><svg class="ico"><use href="#idea"/></svg></div>
    <div class="slot"><svg class="ico"><use href="#postman"/></svg></div>
    <div class="slot"><svg class="ico"><use href="#terminal"/></svg></div>
    <div class="slot"><svg class="ico"><use href="#iterm"/></svg><i class="dot"></i></div>
    <div class="slot"><svg class="ico"><use href="#brave"/></svg><i class="dot"></i></div>
    <div class="slot"><svg class="ico"><use href="#chrome"/></svg></div>
    <div class="slot"><svg class="ico"><use href="#xquartz"/></svg><i class="dot"></i></div>
    <div class="slot"><svg class="ico"><use href="#slack"/></svg><i class="dot"></i></div>
    <div class="slot"><svg class="ico"><use href="#vscode"/></svg><i class="dot"></i></div>
    <span class="sep sep-1"></span>
    <div class="slot"><svg class="ico"><use href="#preview"/></svg><i class="dot"></i></div>
    <span class="sep sep-2"></span>
    <div class="slot"><svg class="ico"><use href="#trash"/></svg></div>
  </footer>
</div>
</body>
</html>
```

FILE: styles.css
```css
* { box-sizing: border-box; }
html, body { margin: 0; padding: 0; }
body { width: 3584px; height: 2240px; overflow: hidden; font-family: "Liberation Sans", Arial, sans-serif; background: #222; }
.defs { position: absolute; width: 0; height: 0; }
symbol { overflow: visible; }
em { font-style: normal; }

.t-rm { font: 700 34px "Liberation Sans", sans-serif; fill: #fff; }
.t-ij { font: 700 35px "Liberation Mono", monospace; fill: #fff; }
.t-dollar { font: 700 26px "Liberation Sans", sans-serif; fill: #5fd84a; }
.t-mar { font: 700 17px "Liberation Sans", sans-serif; fill: #fff; text-anchor: middle; }
.t-four { font: 400 58px "Liberation Sans", sans-serif; fill: #333; text-anchor: middle; }
.t-txt { font: 400 14px "Liberation Sans", sans-serif; fill: #888; text-anchor: middle; }

.screen {
  position: relative; width: 3584px; height: 2240px; overflow: hidden;
  display: flex; flex-direction: column;
  background:
    radial-gradient(620px 300px at 3584px 2110px, #8a3d66 0, rgba(138,61,102,0) 100%),
    linear-gradient(90deg, #1c3a60 0, #26406c 45%, #3a4072 80%, #4a3c6e 100%);
}

/* top macOS bar */
.menubar {
  height: 48px; flex: none; display: flex; align-items: center; color: #fff;
  background: linear-gradient(90deg, #8b5a8e 0, #6b76a8 25%, #4f80b8 42%, #3b7db3 60%, #2f6ea8 100%);
  font-size: 27px;
}
.m-apple { width: 38px; height: 38px; margin-left: 38px; color: #f4f2f6; }
.m-left { display: flex; gap: 41.5px; margin-left: 39px; }
.m-left b { margin-right: -1px; }
.m-right {
  margin-left: auto; padding-right: 36px; display: grid; align-items: center;
  grid-template-columns: 75px 68px 66px 81px 80px 66px 63px 66px 69px auto;
}
.m-ic { width: 40px; height: 34px; color: #f0f4f8; }
.m-clock { font-size: 27.500px; color: #f4f6f8; }

/* slack window */
.slack-window { position: relative; flex: none; height: 2004px; display: flex; flex-direction: column; border-radius: 16px; overflow: hidden; }
.titlebar { position: relative; height: 58px; flex: none; background: #f6f3f4; display: flex; align-items: center; justify-content: center; }
.lights { position: absolute; left: 16px; top: 17px; display: flex; gap: 16px; }
.lights i { width: 24px; height: 24px; border-radius: 50%; }
.l-r { background: #f4695f; } .l-y { background: #f9bd4e; } .l-g { background: #5fc454; }
.title { margin: 0; font: 600 26.800px Inter, "Liberation Sans", sans-serif; color: #404040; letter-spacing: -.1px; }

.call-area { flex: 1; background: #000; padding: 0 62px; min-height: 0; }
.green-frame { height: 1946px; border: 10px solid #6fda3e; border-bottom-color: #69c93a; overflow: hidden; }
.video { position: relative; height: 1926px; display: flex; flex-direction: column; background: #888; filter: blur(.8px); }

/* inner mac bar */
.imenu {
  height: 36px; flex: none; display: flex; align-items: center; padding: 0 0 8px 85px; color: #e6e2f0; font-size: 24px;
  background: linear-gradient(90deg, #3a1a86 0, #4a20a6 40%, #3c1a90 100%); border-bottom: 3px solid #4d3c78; overflow: hidden;
}
.i-apple { position: absolute; left: 40px; top: -4px; width: 32px; height: 32px; color: #f0eef6; }
.imenu b { color: #ece8f4; }
.imenu-left { display: grid; grid-template-columns: 128px 120px 100px 74px 126px 135px 119px 124px 128px auto; }
.imenu-right {
  margin-left: auto; padding-right: 22px; display: grid; align-items: center;
  grid-template-columns: 64px 60px 60px 62px 61px 59px 61px 59px 80px 66px 62px 50px 70px auto;
}
.imi { width: 32px; height: 28px; color: #e8e4f0; }
.imi-wide { width: 48px; }
.i-pct { font-size: 22px; }
.i-clock { font-size: 24.500px; }

/* tabs */
.tabbar { position: relative; height: 75px; flex: none; display: flex; background: #202124; padding-left: 156px; align-items: stretch; color: #b5b5b5; font-size: 22px; }
.i-lights { position: absolute; left: 29px; top: 27px; display: flex; gap: 16px; }
.i-lights i { width: 21px; height: 21px; border-radius: 50%; }
.l-r2 { background: #d9664e; } .l-y2 { background: #d8b840; } .l-g2 { background: #5ab848; }
.tab { position: relative; flex: none; width: 431px; display: flex; align-items: center; padding: 12px 0 0 22px; }
.tab::after { content: ""; position: absolute; right: 0; top: 22px; height: 40px; width: 2px; background: #3d3e42; }
.tab-on { background: #35363a; border-radius: 18px 18px 0 0; color: #e4e4e4; margin-top: 8px; padding-top: 4px; }
.tab-on::after { display: none; }
.fav { width: 30px; height: 30px; flex: none; }
.fav-hz { color: #6aa3dc; }
.tab-t { width: 305px; margin-left: 14px; white-space: nowrap; overflow: hidden; -webkit-mask-image: linear-gradient(90deg, #000 90%, transparent 100%); mask-image: linear-gradient(90deg, #000 90%, transparent 100%); }
.tab-x { margin-left: 24px; font-size: 34px; line-height: 1; color: #bbb; }
.tab-plus { position: absolute; left: 3202px; top: 16px; font-size: 44px; line-height: 48px; font-weight: 700; color: #d8d8d8; }
.tab-chev { position: absolute; left: 3398px; top: 32px; width: 24px; height: 24px; color: #8a8a8a; }

/* toolbar */
.toolbar { height: 58px; flex: none; display: flex; align-items: center; background: #2e2f33; color: #c8c8c8; padding: 6px 0 0 14px; }
.tb { width: 30px; height: 30px; flex: none; margin-right: 28px; }
.tb-fwd { color: #7a7a7a; }
.tb-rel { margin-right: 29px; color: #d8d8d8; }
.omnibox { width: 2952px; height: 48px; flex: none; display: flex; align-items: center; background: #1f2023; border-radius: 24px; padding: 0 24px 0 14px; }
.lock { width: 26px; height: 28px; color: #a0a0a0; flex: none; }
.url { margin-left: 14px; font-size: 26.500px; color: #7d7d7d; white-space: nowrap; }
.url b { color: #e2e2e2; font-weight: 400; }
.ob { width: 30px; height: 30px; margin-left: 28px; color: #a8a8a8; flex: none; }
.url + .ob { margin-left: auto; }
.ext { position: relative; width: 30px; height: 36px; margin-left: 24px; flex: none; }
.ext svg { width: 30px; height: 32px; display: block; }
.ext em { position: absolute; right: -8px; bottom: -10px; background: #c63434; color: #eee; font-size: 15px; border-radius: 8px; padding: 2px 4px; font-weight: 700; }
.ext-blue { background: linear-gradient(#59627f 0 20%, #5b80d8 20%); margin-left: 28px; }
.ext-p { width: 34px; height: 34px; margin-left: 26px; color: #eee; flex: none; }
.avatar { width: 40px; height: 40px; margin-left: 22px; border-radius: 50%; background: radial-gradient(circle at 50% 70%, #26345e 0 30%, #d8d8cc 34%); flex: none; }
.kebab { display: flex; flex-direction: column; gap: 5px; width: 6px; }
.kebab i { width: 6px; height: 6px; border-radius: 50%; background: #222; }
.kebab-l { margin-left: 37px; gap: 7px; }
.kebab-l i { background: #d8d8d8; }

/* bookmarks */
.bookmarks {
  height: 65px; flex: none; display: grid; align-items: center; background: #333438; border-bottom: 5px solid #4a4b4f; color: #d0d0d0; font-size: 22.500px; padding: 2px 0 0 15px;
  grid-template-columns: 120px 130px 109px 208px 150px 173px 252px 267px 274px 179px 177px 274px 268px 344px 51px 232px auto;
}
.bm { display: flex; align-items: center; gap: 15px; white-space: nowrap; }
.bm svg { width: 30px; height: 36px; flex: none; }
.bm-more { font-size: 26px; color: #bbb; }
.bm-dv { position: relative; color: #d8d8d8; }
.bm-dv::before { content: ""; position: absolute; left: -19px; top: -4px; height: 42px; width: 2px; background: #4c4d51; }
.bm-dv svg { color: #aaa; }

/* harness header */
.hz-header { height: 145px; flex: none; display: flex; align-items: center; background: #0c0e11; padding: 0 40px 32px 28px; color: #bcbcbc; }
.hz-logo { width: 50px; height: 50px; color: #4f7ea8; flex: none; }
.hz-name { margin-left: 5px; font: 700 49px Lato, sans-serif; color: #c2c2c2; letter-spacing: -.5px; }
.hz-div { width: 2px; height: 50px; background: #2e3033; margin-left: 44px; }
.hz-page { margin-left: 43px; font: 400 40px Lato, sans-serif; color: #8f8f8f; white-space: nowrap; }
.hz-try { margin-left: 42px; padding: 12px 24px 0; height: 60px; background: #6a6a6a; color: #3c3c3c; font: 400 25px Lato, sans-serif; border-radius: 4px; white-space: nowrap; }
.hz-right { margin-left: auto; display: flex; gap: 29px; }
.hz-circ { width: 44px; height: 44px; border-radius: 50%; background: #8c8c8c; color: #333; display: flex; align-items: center; justify-content: center; font: 400 28px Lato, sans-serif; }
.hz-circ svg { width: 24px; height: 24px; }
.hz-k { background: #6c8ab5; color: #1d2e4d; }

/* harness body */
.hz-body { position: relative; flex: 1; min-height: 0; display: flex; overflow: hidden; }
.sidebar { width: 548px; flex: none; background: #8a8a8a; color: #5a5a5a; font: 400 28.500px Lato, sans-serif; }
.s-row { position: relative; height: 120px; display: flex; align-items: center; gap: 27px; padding-left: 29px; }
.s-row svg { width: 36px; height: 36px; flex: none; }
.s-row span { color: #3c3c3c; white-space: nowrap; }
.s-row .s-dim { color: #5e5e5e; }
.s-collapse { height: 92px; padding-bottom: 34px; border-bottom: 2px solid #808080; }
.s-sep { border-bottom: 2px solid #7f7f7f; }
.s-ccm { gap: 34px; height: 123px; }
.s-ccm svg { margin-top: -8px; }
.s-active { background: #7d8687; color: #3f5bb0; margin-top: 2px; height: 114px; margin-bottom: 4px; }
.s-active span { color: #3d5296; }
.s-notif { gap: 30px; }
.s-notif .s-bell { margin-left: 2px; }
.s-count { position: absolute; left: 44px; top: 10px; font-size: 18px; color: #555; }
.gutter { width: 43px; flex: none; background: #7f7f7f; }
.content { position: relative; flex: 1; min-width: 0; display: flex; flex-direction: column; background: #808080; }
.c-top { height: 93px; flex: none; background: #8a8a8a; border-bottom: 2px solid #7a7a7a; }
.c-list { flex: 1; min-height: 0; display: flex; flex-direction: column; gap: 46px; padding-top: 122px; overflow: hidden; width: 2780px; }
.content::after { content: ""; position: absolute; right: 0; top: 93px; bottom: 0; width: 17px; background: #8b8c89; }
.card { flex: none; background: #8b8b8b; }
.card-1 { height: 381px; }
.card-2 { height: 376px; }
.card-3 { height: 400px; }
.card-h { height: 85px; display: flex; justify-content: flex-end; align-items: center; padding: 10px 44px 0 0; }
.card-h-line { border-bottom: 2px solid #7c7c7c; }
.kv { margin: 103px 0 0 41px; display: grid; grid-template-columns: 487px 1fr; grid-auto-rows: 59px; align-items: center; font: 400 28.500px Lato, sans-serif; color: #3f3f3f; }
.kv dt, .kv dd { margin: 0; white-space: nowrap; }
.help-fab { position: absolute; right: 30px; top: 1303px; width: 60px; height: 60px; border-radius: 50%; background: #7c93cc; box-shadow: 0 0 0 6px #7c8fc2; display: flex; align-items: center; justify-content: center; }
.help-fab span { width: 54px; height: 54px; border-radius: 50%; border: 3px solid #d4dcf0; color: #d4dcf0; font: 400 34px/48px Lato, sans-serif; text-align: center; }

/* inner dock */
.inner-dock-row { height: 141px; flex: none; background: #000; padding-left: 312px; }
.inner-dock {
  width: 2806px; height: 141px; display: flex; padding-left: 4px; border-radius: 34px 34px 0 0;
  background: linear-gradient(90deg, #12082e 0, #1f0e40 30%, #24104a 50%, #45176a 70%, #50167a 85%, #3a1060 100%);
}
.islot { position: relative; flex: none; width: 122.500px; padding-top: 19px; display: flex; flex-direction: column; align-items: center; }
.iico { width: 93px; height: 94px; overflow: visible; }
.idot { width: 5px; height: 8px; margin-top: 17px; background: #7e6f8e; border-radius: 3px; }
.ibadge { position: absolute; left: 88px; top: 10px; width: 42px; height: 42px; background: #e0623f; border-radius: 50%; }
.isep { flex: none; width: 2px; height: 110px; margin-top: 15px; background: #6a5a88; }
.isep-1 { margin-left: 28px; margin-right: 25px; }
.isep-2 { margin-left: 28px; margin-right: 26px; }
.idl { flex: none; width: 114px; height: 115px; margin: 9px 0 0 5px; background: #5e88d6; padding: 12px 8px; }
.idl svg { width: 98px; height: 90px; overflow: visible; display: block; }

/* modal */
.modal { position: absolute; left: 425px; top: 296px; width: 2590px; height: 1325px; background: #fff; box-shadow: 0 12px 60px rgba(0,0,0,.5); font-family: Lato, sans-serif; }
.modal-h { position: relative; height: 83px; background: #6b8eef; display: flex; align-items: center; padding-left: 38px; color: #e4ebff; }
.modal-t { font-size: 38.500px; }
.qm { display: inline-block; border-radius: 50%; text-align: center; }
.qm-w { width: 32px; height: 32px; border: 2px solid #e4ebff; font-size: 22px; line-height: 28px; margin-left: 15px; margin-top: -6px; }
.modal-x { position: absolute; left: 2518px; top: 28px; width: 28px; height: 28px; }
.sec-h { height: 50px; display: flex; align-items: center; padding-left: 42px; font-size: 36px; color: #7d9ae2; }
.sec-h svg { width: 26px; height: 26px; margin: 0 9px 0 -2px; flex: none; }
.sec-open { margin-top: 40px; color: #444; }
.form { padding-left: 79px; }
.field { display: grid; grid-template-columns: 238px 971px; align-items: center; }
.field label { font-size: 28.500px; color: #7a7a7a; display: flex; align-items: center; gap: 12px; }
.field-1 { margin-top: 24px; height: 68px; }
.field-1 label { margin-top: -4px; }
.field-2 { margin-top: 40px; height: 70px; }
.field-2 label { margin-top: -2px; }
.input { height: 100%; border: 2px solid #c3c6cd; border-radius: 2px; font-size: 28.500px; color: #666; display: flex; align-items: center; padding: 0 0 2px 24px; }
.input-on { border-color: #b9bfd2; box-shadow: 0 2px 8px rgba(90,100,140,.35); }
.qm-g { width: 26px; height: 26px; border: 2px solid #c4c4c4; color: #c4c4c4; font-size: 17px; line-height: 22px; }
.qm-c { width: 26px; height: 26px; border: 2px solid #c4c8d0; color: #c4c8d0; font-size: 17px; line-height: 22px; margin: -15px 0 0 6px; }
.btn-next { margin-top: 108px; width: 258px; height: 70px; border: 2px solid #d0d2d8; border-radius: 6px; box-shadow: 0 2px 3px rgba(90,100,120,.25); display: flex; align-items: center; justify-content: center; font-size: 28.500px; padding-bottom: 3px; color: #4f5d75; }
.sec-cond { margin-top: 98px; }
.sec-act { margin-top: 41px; padding-bottom: 2px; }
.btn-submit { margin: 81px 0 0 38px; width: 258px; height: 69px; background: #abc3f3; border-radius: 5px; color: #dbe5fa; display: flex; align-items: center; justify-content: center; font-size: 28.500px; padding-bottom: 3px; }
.ibeam { position: absolute; left: 394px; top: 216px; width: 12px; height: 30px; }

/* color picker */
.picker { position: absolute; left: 2624px; top: 1864px; width: 899px; height: 130px; background: #1c1c1c; border-radius: 0 6px 6px 0; border-top: 2px solid #555; border-bottom: 2px solid #555; display: flex; align-items: center; padding-left: 42px; color: #fff; }
.picker-t { font: 400 30px Lato, sans-serif; width: 204px; white-space: nowrap; }
.picker-bar { position: relative; width: 612px; height: 24px; border-radius: 2px; background: linear-gradient(90deg, #e8332a 0, #f09a3a 10%, #d8f04f 20%, #7df55a 30%, #6cfbe0 50%, #1030f8 67%, #b535f0 77%, #e8409a 87%, #ee2f28 98%); }
.picker-bar i { position: absolute; left: -16px; top: -4px; width: 31px; height: 32px; border-radius: 50%; background: #e0281e; border: 4px solid #fff; }

/* dock */
.dock {
  position: relative; flex: none; width: 2920px; height: 175px; margin: 2px 0 0 332px; display: flex; padding-left: 3px;
  border-radius: 44px; border: 2px solid rgba(210,210,240,.35);
  background: linear-gradient(90deg, #6b80b6 0, #7a81b6 30%, #8580b5 60%, #8d7cb3 85%, #9c75a8 100%);
}
.slot { position: relative; flex: none; width: 154px; padding-top: 22px; display: flex; flex-direction: column; align-items: center; }
.ico { width: 116px; height: 117px; overflow: visible; flex: none; }
.dot { width: 7px; height: 7px; margin-top: 23px; border-radius: 50%; background: #0b1550; }
.badge { position: absolute; left: 104px; top: 10px; width: 54px; height: 58px; border-radius: 50%; background: #e8523f; color: #fff; font: 400 32px/58px "Liberation Sans", sans-serif; text-align: center; }
.sep { flex: none; width: 2px; height: 130px; margin-top: 20px; background: #5d4d7d; }
.sep-1 { margin-left: 36px; margin-right: 30px; }
.sep-2 { margin-left: 36px; margin-right: 33px; }
```
